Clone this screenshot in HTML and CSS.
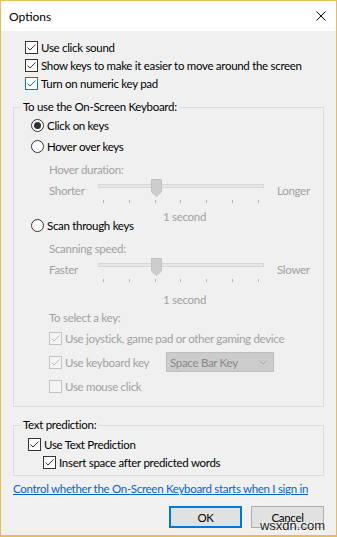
FILE: index.html
```html
<!DOCTYPE html>
<html>
<head>
<meta charset="utf-8">
<link rel="stylesheet" href="styles.css">
</head>
<body>
<div class="window">
  <div class="titlebar">
    <span class="title">Options</span>
    <svg class="close" viewBox="0 0 10 10"><path d="M0.5 0.5 L9.5 9.5 M9.5 0.5 L0.5 9.5" stroke="#000" stroke-width="1" fill="none"/></svg>
  </div>
  <div class="body">
    <div class="top-checks">
      <div class="crow"><span class="cb"><svg viewBox="0 0 11 11"><polyline points="1.5,5.5 4,8 9.5,2.5"/></svg></span>Use click sound</div>
      <div class="crow"><span class="cb"><svg viewBox="0 0 11 11"><polyline points="1.5,5.5 4,8 9.5,2.5"/></svg></span>Show keys to make it easier to move around the screen</div>
      <div class="crow"><span class="cb hot"><svg viewBox="0 0 11 11"><polyline points="1.5,5.5 4,8 9.5,2.5"/></svg></span>Turn on numeric key pad</div>
    </div>

    <fieldset class="group g1">
      <legend>To use the On-Screen Keyboard:</legend>
      <div class="rrow"><span class="rb on"></span>Click on keys</div>
      <div class="rrow"><span class="rb"></span>Hover over keys</div>
      <div class="sub">
        <div class="cap">Hover duration:</div>
        <div class="slider-row">
          <span class="lab l">Shorter</span>
          <div class="slider">
            <div class="track"></div>
            <svg class="thumb" viewBox="0 0 11 18"><polygon points="0.5,0.5 10.5,0.5 10.5,13 5.5,17.5 0.5,13"/></svg>
            <div class="ticks"><i></i><i></i><i></i><i></i><i></i><i></i><i></i></div>
          </div>
          <span class="lab r">Longer</span>
        </div>
        <div class="sec">1 second</div>
      </div>
      <div class="rrow scan"><span class="rb"></span>Scan through keys</div>
      <div class="sub">
        <div class="cap">Scanning speed:</div>
        <div class="slider-row">
          <span class="lab l">Faster</span>
          <div class="slider">
            <div class="track"></div>
            <svg class="thumb" viewBox="0 0 11 18"><polygon points="0.5,0.5 10.5,0.5 10.5,13 5.5,17.5 0.5,13"/></svg>
            <div class="ticks"><i></i><i></i><i></i><i></i><i></i><i></i><i></i></div>
          </div>
          <span class="lab r">Slower</span>
        </div>
        <div class="sec sec2">1 second</div>
        <div class="cap sel">To select a key:</div>
        <div class="drow"><span class="cb dis"><svg viewBox="0 0 11 11"><polyline points="1.5,5.5 4,8 9.5,2.5"/></svg></span>Use joystick, game pad or other gaming device</div>
        <div class="drow"><span class="cb dis"><svg viewBox="0 0 11 11"><polyline points="1.5,5.5 4,8 9.5,2.5"/></svg></span><span class="kk">Use keyboard key</span>
          <div class="combo"><span>Space Bar Key</span><svg viewBox="0 0 8 5"><polyline points="0.5,0.5 4,4 7.5,0.5"/></svg></div>
        </div>
        <div class="drow"><span class="cb dis"></span>Use mouse click</div>
      </div>
    </fieldset>

    <fieldset class="group g2">
      <legend>Text prediction:</legend>
      <div class="crow p1"><span class="cb"><svg viewBox="0 0 11 11"><polyline points="1.5,5.5 4,8 9.5,2.5"/></svg></span>Use Text Prediction</div>
      <div class="crow p2"><span class="cb"><svg viewBox="0 0 11 11"><polyline points="1.5,5.5 4,8 9.5,2.5"/></svg></span>Insert space after predicted words</div>
    </fieldset>

    <a class="link" href="#">Control whether the On-Screen Keyboard starts when I sign in</a>

    <div class="buttons">
      <div class="btn default">OK</div>
      <div class="btn">Cancel</div>
    </div>
  </div>
  <div class="watermark">wsxdn.com</div>
</div>
</body>
</html>
```

FILE: styles.css
```css
* { box-sizing: border-box; }
html, body { margin: 0; padding: 0; }
body {
  font-family: Lato, "Liberation Sans", sans-serif;
  font-size: 11.5px;
  letter-spacing: -0.3px;
  color: #000;
  background: #fff;
}
.window {
  width: 337px;
  height: 537px;
  border: 1px solid #e6bc5c;
  border-bottom-width: 2px;
  background: #f0f0f0;
  position: relative;
  display: flex;
  flex-direction: column;
}
.titlebar {
  height: 30px;
  flex: none;
  background: #fff;
  display: flex;
  align-items: center;
  justify-content: space-between;
  padding: 0 10px 0 8px;
}
.title { font-size: 12px; letter-spacing: 0; }
.close { width: 10px; height: 10px; display: block; }
.body { display: flex; flex-direction: column; }

.top-checks { padding: 7px 0 0 24px; }
.crow { height: 18px; display: flex; align-items: center; white-space: nowrap; }
.cb {
  width: 13px; height: 13px; flex: none;
  border: 1px solid #333;
  background: #fff;
  margin-right: 3px;
  display: flex;
}
.cb svg { width: 11px; height: 11px; display: block; }
.cb polyline { fill: none; stroke: #333; stroke-width: 1; }
.cb.hot { border-color: #0078d7; }
.cb.hot polyline { stroke: #0078d7; }
.cb.dis { border-color: #c4c4c4; background: #f4f4f4; }
.cb.dis polyline { stroke: #bcbcbc; }

.group {
  margin: 7px 12px 0;
  padding: 0 0 8px;
  border: 1px solid #dcdcdc;
  min-width: 0;
}
.group legend { margin-left: 7px; padding: 0 2px; line-height: 16px; }

.rrow { height: 21px; display: flex; align-items: center; padding-left: 17px; }
.rrow.scan { margin-top: -10px; }
.rb {
  width: 13px; height: 13px; flex: none;
  border-radius: 50%;
  border: 1px solid #333;
  background: #fff;
  margin-right: 3px;
  display: flex; align-items: center; justify-content: center;
}
.rb.on::after {
  content: "";
  width: 7px; height: 7px;
  border-radius: 50%;
  background: #333;
}

.sub { padding-left: 35px; color: #a0a0a0; }
.cap { line-height: 16px; margin-top: 5px; }
.cap.sel { margin-top: 2px; }
.slider-row { display: flex; height: 26px; }
.lab { line-height: 16px; margin-top: 5px; }
.lab.l { width: 49px; }
.lab.r { margin-left: 13px; }
.slider { width: 166px; position: relative; }
.track {
  margin-top: 6px;
  height: 4px;
  background: #e7e7e7;
  border: 1px solid #d6d6d6;
}
.thumb { position: absolute; left: 53px; top: 1px; width: 11px; height: 18px; }
.thumb polygon { fill: #cdcdcd; stroke: #c2c2c2; stroke-width: 1; }
.ticks { margin-top: 12px; height: 3px; padding: 0 5px; display: flex; justify-content: space-between; }
.ticks i { width: 1px; height: 3px; background: #b4b4b4; display: block; }
.sec { line-height: 16px; margin-top: 5px; padding-left: 114px; }
.sec.sec2 { margin-top: 9px; }

.drow { height: 24px; display: flex; align-items: center; white-space: nowrap; }
.kk { width: 101px; }
.combo {
  width: 108px; height: 20px;
  background: #cccccc;
  border: 1px solid #bfbfbf;
  display: flex; align-items: center; justify-content: space-between;
  padding: 0 6px 0 3px;
  color: #888;
}
.combo svg { width: 8px; height: 5px; display: block; }
.combo polyline { fill: none; stroke: #a8a8a8; stroke-width: 1; }

.g2 { margin-top: 10px; padding-bottom: 4px; }
.g2 .p1 { margin-top: 2px; padding-left: 14px; }
.g2 .p2 { padding-left: 29px; }

.link {
  margin: 5px 0 0 12px;
  line-height: 16px;
  color: #0066cc;
  text-decoration: underline;
  white-space: nowrap;
}
.buttons { margin-top: 9px; display: flex; justify-content: flex-end; gap: 9px; padding-right: 12px; }
.btn {
  width: 73px; height: 22px;
  background: #e1e1e1;
  border: 1px solid #adadad;
  display: flex; align-items: center; justify-content: center;
}
.btn.default { border: 2px solid #0078d7; }

.watermark {
  position: absolute;
  right: 11px;
  bottom: 2px;
  font-family: "Liberation Sans", sans-serif;
  font-size: 13px;
  letter-spacing: 0;
  line-height: 14px;
  color: #1a1a1a;
  text-shadow: 0 0 2px #fff, 0 0 2px #fff;
}
```
